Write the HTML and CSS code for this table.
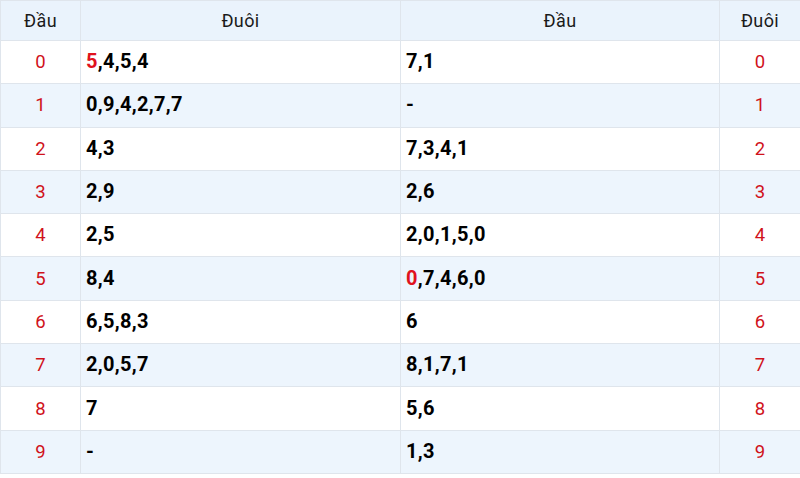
FILE: index.html
```html
<!DOCTYPE html>
<html>
<head>
<meta charset="utf-8">
<link rel="stylesheet" href="styles.css">
</head>
<body>
<table class="loto">
  <colgroup>
    <col class="c-num"><col class="c-val"><col class="c-val2"><col class="c-num2">
  </colgroup>
  <thead>
    <tr><th>Đầu</th><th>Đuôi</th><th>Đầu</th><th>Đuôi</th></tr>
  </thead>
  <tbody>
    <tr><td class="num">0</td><td class="val"><span class="hi">5</span>,4,5,4</td><td class="val">7,1</td><td class="num">0</td></tr>
    <tr><td class="num">1</td><td class="val">0,9,4,2,7,7</td><td class="val">-</td><td class="num">1</td></tr>
    <tr><td class="num">2</td><td class="val">4,3</td><td class="val">7,3,4,1</td><td class="num">2</td></tr>
    <tr><td class="num">3</td><td class="val">2,9</td><td class="val">2,6</td><td class="num">3</td></tr>
    <tr><td class="num">4</td><td class="val">2,5</td><td class="val">2,0,1,5,0</td><td class="num">4</td></tr>
    <tr><td class="num">5</td><td class="val">8,4</td><td class="val"><span class="hi">0</span>,7,4,6,0</td><td class="num">5</td></tr>
    <tr><td class="num">6</td><td class="val">6,5,8,3</td><td class="val">6</td><td class="num">6</td></tr>
    <tr><td class="num">7</td><td class="val">2,0,5,7</td><td class="val">8,1,7,1</td><td class="num">7</td></tr>
    <tr><td class="num">8</td><td class="val">7</td><td class="val">5,6</td><td class="num">8</td></tr>
    <tr><td class="num">9</td><td class="val">-</td><td class="val">1,3</td><td class="num">9</td></tr>
  </tbody>
</table>
</body>
</html>
```
FILE: styles.css
```css
html, body {
  margin: 0;
  padding: 0;
  background: #ffffff;
}
body {
  font-family: Roboto, "Noto Sans", sans-serif;
  color: #111;
}
.loto {
  width: 800px;
  border-collapse: collapse;
  table-layout: fixed;
}
.c-num { width: 80px; }
.c-val { width: 320px; }
.c-val2 { width: 319px; }
.c-num2 { width: 81px; }
.loto th, .loto td {
  border: 1px solid #dfe5ec;
  padding: 0;
}
.loto thead tr {
  height: 40px;
  background: #eaf3fc;
}
.loto th {
  font-weight: 400;
  font-size: 18px;
  letter-spacing: 0.4px;
  color: #1a1a1a;
  text-align: center;
}
.loto tbody tr {
  height: 43.3px;
}
.loto tbody tr:nth-child(even) {
  background: #edf5fd;
}
.num {
  text-align: center;
  color: #d0121b;
  font-size: 18.5px;
}
.val {
  padding: 0 0 2px 5px !important;
  font-weight: 700;
  font-size: 20px;
  letter-spacing: 0.3px;
  color: #000;
}
.hi {
  color: #e0121d;
}
```
